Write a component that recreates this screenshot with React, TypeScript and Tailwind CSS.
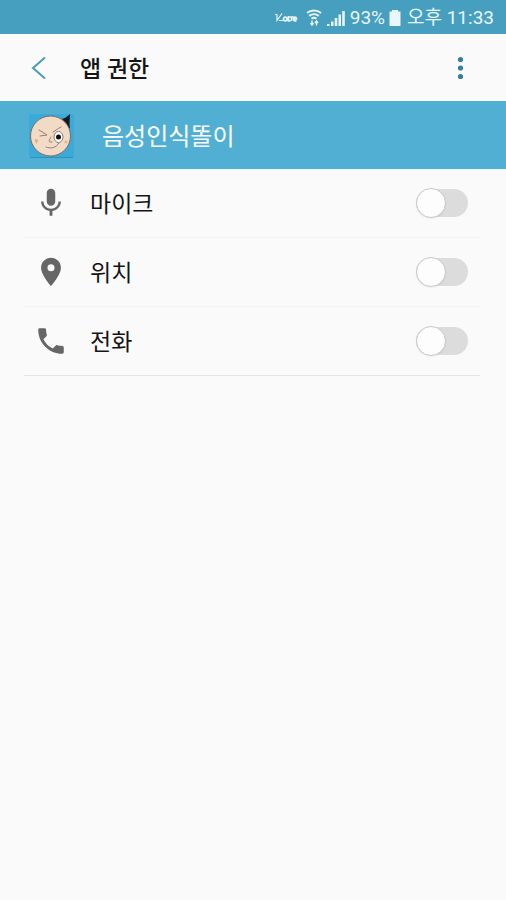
import { useState, type ReactNode } from "react";
import { MdMic, MdPhone, MdPlace } from "react-icons/md";
import type { IconType } from "react-icons";

type Permission = {
  id: string;
  label: string;
  icon: IconType;
};

const permissions: Permission[] = [
  { id: "mic", label: "마이크", icon: MdMic },
  { id: "location", label: "위치", icon: MdPlace },
  { id: "phone", label: "전화", icon: MdPhone },
];

const VolteIcon = () => (
  <svg className="h-3 w-6" viewBox="0 0 24 12" fill="none" stroke="currentColor" aria-hidden="true">
    <path d="M1 2.5h2v6L8 1.5M5 8.5h4" strokeWidth="1.2" />
    <path d="M9.5 7c0-2.5 3.5-2.5 3.500 0s-3.500 2.500-3.500 0M14.500 4v5h2M15.500 5h4M17.500 5v4M19.500 7h3c0-2.500-3-2.500-3 0s2 2 3 1.500" strokeWidth="1.7" />
  </svg>
);

const WifiIcon = () => (
  <svg className="h-5 w-4" viewBox="0 0 16 20" fill="none" stroke="currentColor" aria-hidden="true">
    <path d="M1 5c4-3.500 10-3.500 14 0" strokeWidth="2" />
    <path d="M3.200 8c2.600-2.500 7-2.500 9.600 0" strokeWidth="1.8" />
    <path d="M5.500 10.800c1.400-1.200 3.600-1.200 5 0" strokeWidth="1.8" />
    <path d="M6 12.500v4M4.500 15L6 17l1.500-2M10.500 17.500v-4M9 15l1.500-2 1.500 2" strokeWidth="1.4" />
  </svg>
);

const SignalIcon = () => (
  <svg className="h-5 w-5" viewBox="0 0 20 20" fill="currentColor" aria-hidden="true">
    <path d="M1 16h2.500v2H1zM5 13.500h2.500V18H5zM8.700 10h2.600v8H8.700zM12.500 6.500H15V18h-2.500zM16.200 3h2.600v15h-2.600z" />
  </svg>
);

const BatteryIcon = () => (
  <svg className="h-5 w-3" viewBox="0 0 12 20" fill="currentColor" aria-hidden="true">
    <path d="M3 2h6v1.500h2.500V18H.5V3.500H3z" />
  </svg>
);

const AppIcon = () => (
  <svg className="size-12" viewBox="0 0 48 48" aria-hidden="true">
    <rect x="1" y="3" width="45" height="43" rx="2" fill="#3aaadb" />
    <path d="M2 46.500h43" stroke="#2c91bb" />
    <path d="M32 8c4 0 7-2 10-5 0 5-1 9 0 15z" fill="#151a20" />
    <circle cx="22.500" cy="25" r="20" fill="#f1dac6" stroke="#7d6a5f" strokeWidth="1" />
    <g fill="none" stroke="#9a7c6e" strokeWidth="1" strokeLinecap="round">
      <path d="M11 19l8 5-7 1M25 21c2-1 4-3 8-5" />
      <path d="M23 26c-1 2-3 4-1 5h2M18 36c5 2 10 1 13-4" />
    </g>
    <ellipse cx="30.500" cy="26" rx="4.500" ry="5.500" fill="#fff" stroke="#8d776b" strokeWidth="1" />
    <circle cx="30.500" cy="26" r="2.500" fill="#111" />
    <path d="M7 28l1 5 2-4z" fill="#e9a05c" />
    <circle cx="38" cy="31" r="1.500" fill="#ecb48c" />
  </svg>
);

const StatusBar = () => (
  <div className="flex h-[34px] items-center justify-end bg-[#479fbf] pr-3 pt-[2px] text-[19px] leading-6 text-[#e9f6fb]">
    <VolteIcon />
    <span className="ml-2 flex items-center gap-1">
      <WifiIcon />
      <SignalIcon />
      <span>93%</span>
      <BatteryIcon />
    </span>
    <span className="ml-[6px] whitespace-nowrap">오후 11:33</span>
  </div>
);

const Header = ({ children }: { children: ReactNode }) => (
  <header className="flex h-[67px] items-center pl-6 pr-8">
    <button type="button" aria-label="뒤로" className="flex size-8 cursor-pointer items-center justify-center text-[#4a9db8]">
      <svg className="size-6" viewBox="0 0 24 24" fill="none" stroke="currentColor" strokeWidth="2" aria-hidden="true">
        <path d="M17 1.500L5 12l12 10.500" />
      </svg>
    </button>
    <h1 className="ml-6 flex-1 pt-1 text-[23px] font-medium leading-8 text-[#151515]">{children}</h1>
    <button type="button" aria-label="더보기" className="flex size-7 cursor-pointer items-center justify-center text-[#347f9b]">
      <svg className="size-6" viewBox="0 0 24 24" fill="currentColor" aria-hidden="true">
        <circle cx="12.500" cy="3.500" r="2.600" />
        <circle cx="12.500" cy="12" r="2.600" />
        <circle cx="12.500" cy="20.500" r="2.600" />
      </svg>
    </button>
  </header>
);

const PermissionRow = ({ permission }: { permission: Permission }) => {
  const [granted, setGranted] = useState(false);
  const Icon = permission.icon;

  return (
    <li className="flex h-[69px] items-center border-b border-[#f4f4f4] pl-[10px] pr-3 last:border-[#e3e3e3]">
      <Icon className="size-[34px] shrink-0 text-[#666]" aria-hidden="true" />
      <label htmlFor={permission.id} className="ml-[22px] flex-1 pt-1 text-[23px] leading-8 text-[#151515]">
        {permission.label}
      </label>
      <input
        id={permission.id}
        type="checkbox"
        role="switch"
        checked={granted}
        onChange={(e) => setGranted(e.target.checked)}
        className="flex h-7 w-[52px] shrink-0 cursor-pointer appearance-none items-center rounded-full bg-[#dcdcdc] before:size-[30px] before:rounded-full before:border before:border-[#c8c8c8] before:bg-[#fdfdfd] before:shadow-xs checked:justify-end checked:bg-[#52afd4]"
      />
    </li>
  );
};

export default function App() {
  return (
    <div className="min-h-screen bg-[#fafafa] font-['Roboto','Noto_Sans_CJK_KR',sans-serif]">
      <StatusBar />
      <Header>앱 권한</Header>
      <main>
        <div className="flex h-[68px] items-center bg-[#52afd4] pl-7">
          <AppIcon />
          <h2 className="ml-[26px] pt-1 text-2xl leading-8 text-white">음성인식똘이</h2>
        </div>
        <ul className="ml-6 mr-[26px]">
          {permissions.map((permission) => (
            <PermissionRow key={permission.id} permission={permission} />
          ))}
        </ul>
      </main>
    </div>
  );
}
